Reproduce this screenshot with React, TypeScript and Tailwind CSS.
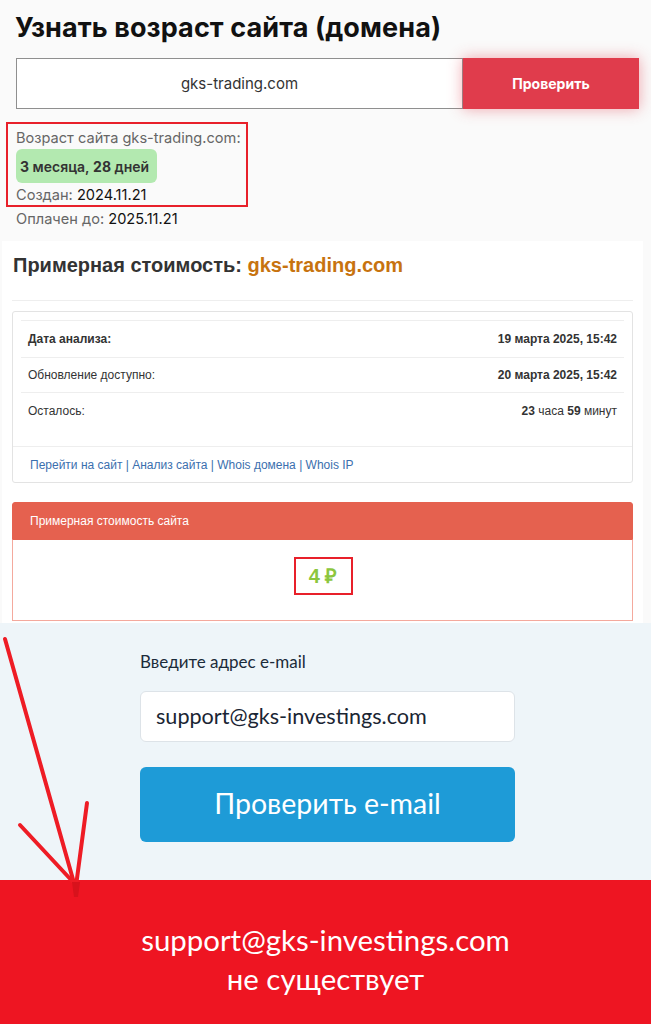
import React from "react";

export default function App() {
  return (
    <div className="relative w-[651px] h-[1024px] overflow-hidden bg-[#fafafa]">
      {/* Section 1 */}
      <div className="pt-[12px] pb-[12px] font-['Inter',sans-serif]">
        <h1 className="ml-[15px] text-[27px] leading-[32px] font-bold text-[#111] tracking-[0.1px]">
          Узнать возраст сайта (домена)
        </h1>
        <div className="mt-[14px] ml-[16px] flex h-[51px] w-[623px]">
          <div className="flex-1 border border-[#8f8f8f] bg-white flex items-center justify-center pt-[2px] text-[15px] text-[#333]">
            gks-trading.com
          </div>
          <div className="w-[176px] bg-[#e03c4c] flex items-center justify-center text-white text-[14px] font-bold shadow-[0_0_14px_rgba(224,60,76,0.45)]">
            Проверить
          </div>
        </div>
        <div className="mt-[13px] ml-[6px] w-[242px] h-[85px] border-2 border-[#e8202a] pl-[8px] pt-[4px]">
          <div className="text-[14.6px] leading-[20px] text-[#666] whitespace-nowrap">
            Возраст сайта gks-trading.com:
          </div>
          <div className="mt-[1px] h-[34px] w-[141px] rounded-[6px] bg-[#b3e9b0] flex items-center pl-[4px] text-[14px] text-[#333] font-semibold whitespace-nowrap">
            <span className="font-bold">3</span>&nbsp;месяца,&nbsp;<span className="font-bold">28</span>&nbsp;дней
          </div>
          <div className="mt-[2px] text-[14.6px] leading-[20px] text-[#666]">
            Создан: <span className="text-[#111]">2024.11.21</span>
          </div>
        </div>
        <div className="mt-[2px] ml-[16px] text-[14.6px] leading-[20px] text-[#666]">
          Оплачен до: <span className="text-[#111]">2025.11.21</span>
        </div>
      </div>

      {/* Section 2 + 3 */}
      <div className="ml-[2px] w-[641px] h-[382px] bg-white pt-[12px] font-['Liberation_Sans',Arial,sans-serif]">
        <div className="ml-[11px] text-[20px] leading-[24px] font-bold text-[#333]">
          Примерная стоимость: <span className="text-[#c7730f]">gks-trading.com</span>
        </div>
        <div className="mt-[23px] mx-[10px] h-px bg-[#eeeeee]" />
        <div className="mt-[10px] mx-[10px] border border-[#e3e3e3] rounded-[3px] pt-[8px]">
          <div className="mx-[8px] text-[12px] text-[#333]">
            <div className="border-t border-[#eeeeee] h-[37px] px-[7px] flex items-center justify-between">
              <span className="font-bold">Дата анализа:</span>
              <span className="font-bold">19 марта 2025, 15:42</span>
            </div>
            <div className="border-t border-[#eeeeee] h-[35px] px-[7px] flex items-center justify-between">
              <span>Обновление доступно:</span>
              <span className="font-bold">20 марта 2025, 15:42</span>
            </div>
            <div className="border-t border-[#eeeeee] h-[36px] px-[7px] flex items-center justify-between">
              <span>Осталось:</span>
              <span>
                <span className="font-bold">23</span> часа <span className="font-bold">59</span> минут
              </span>
            </div>
          </div>
          <div className="mt-[18px] border-t border-[#eeeeee] h-[36px] px-[17px] flex items-center text-[12px] text-[#3b6fae]">
            Перейти на сайт | Анализ сайта | Whois домена | Whois IP
          </div>
        </div>

        <div className="mt-[19px] mx-[10px]">
          <div className="h-[38px] bg-[#e5614f] border border-[#e5614f] rounded-t-[3px] px-[17px] flex items-center text-white text-[12px]">
            Примерная стоимость сайта
          </div>
          <div className="h-[81px] border border-t-0 border-[#f4a99d] pt-[17px] flex justify-center">
            <div className="h-[38px] w-[59px] border-2 border-[#e8202a] flex items-center justify-center text-[20px] font-bold text-[#8cc63e] ml-[1px]">
              4 ₽
            </div>
          </div>
        </div>
      </div>

      {/* Section 4 */}
      <div className="h-[257px] bg-[#eef5f9] pt-[27px] font-['Lato',sans-serif]">
        <div className="ml-[140px] w-[375px]">
          <div className="text-[17px] leading-[24px] text-[#1b2b3a]">Введите адрес e-mail</div>
          <div className="mt-[17px] h-[51px] rounded-[6px] border border-[#dde3e8] bg-white flex items-center pl-[15px] text-[21.6px] text-[#1a2533]">
            support@gks-investings.com
          </div>
          <div className="mt-[25px] h-[75px] rounded-[6px] bg-[#1e9bd7] flex items-center justify-center pb-[2px] text-white text-[28.5px]">
            Проверить e-mail
          </div>
        </div>
      </div>

      {/* Section 5 */}
      <div className="h-[144px] bg-[#ee1522] pt-[40px] text-center text-white text-[29.4px] leading-[39px] font-['Lato',sans-serif]">
        <div>support@gks-investings.com</div>
        <div>не существует</div>
      </div>

      {/* Arrow annotation */}
      <svg className="absolute left-0 top-0 pointer-events-none" width="651" height="1024" viewBox="0 0 651 1024">
        <g stroke="#ee1c25" strokeWidth="4" strokeLinecap="round" fill="none">
          <line x1="5" y1="639" x2="76" y2="890" />
          <line x1="20" y1="825" x2="74" y2="883" />
          <line x1="87" y1="803" x2="76" y2="886" />
        </g>
        <polygon points="72,882 80,882 78,897 74,897" fill="#d8121c" />
      </svg>
    </div>
  );
}
